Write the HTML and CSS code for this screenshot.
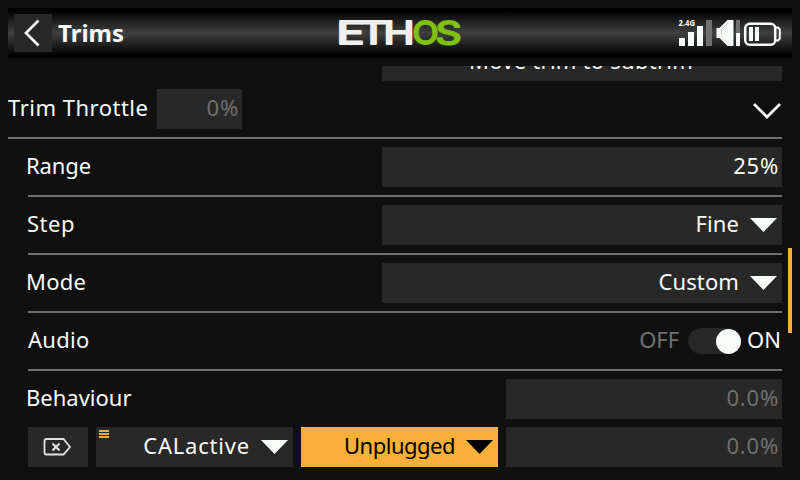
FILE: index.html
```html
<!DOCTYPE html>
<html lang="en">
<head>
<meta charset="utf-8">
<title>Trims</title>
<link rel="stylesheet" href="styles.css">
</head>
<body>
<header class="topbar">
  <button class="back" aria-label="Back"><svg width="38" height="38" viewBox="0 0 38 38"><path d="M24.500 6.500L12 19l12.500 12.500" fill="none" stroke="#f8fcf8" stroke-width="2.700"/></svg></button>
  <h1 class="title">Trims</h1>
  <svg class="logo" width="128" height="40" viewBox="0 -5 128 40">
    <g fill="#f0f0f0" stroke="#f0f0f0">
      <text x="-1.500" y="26" textLength="28" lengthAdjust="spacingAndGlyphs">E</text>
      <text x="22" y="26" textLength="27" lengthAdjust="spacingAndGlyphs">T</text>
      <text x="45.500" y="26" textLength="31" lengthAdjust="spacingAndGlyphs">H</text>
    </g>
    <g fill="#80c010" stroke="#80c010">
      <text x="74.500" y="26" textLength="26" lengthAdjust="spacingAndGlyphs">O</text>
      <text x="97.500" y="26" textLength="26" lengthAdjust="spacingAndGlyphs">S</text>
    </g>
  </svg>
  <svg class="status" width="104" height="30" viewBox="0 0 104 30">
    <text class="band" x="0.500" y="8" textLength="16.500" lengthAdjust="spacingAndGlyphs">2.4G</text>
    <g fill="#f8fcf8">
      <rect x="1" y="20" width="6" height="8"/><rect x="10" y="14" width="6" height="14"/><rect x="19" y="8" width="6" height="20"/>
      <path d="M38.500 10h3l8-8h6v26h-6l-8-8h-3z"/><rect x="58" y="15" width="4" height="13"/>
      <rect x="71" y="9" width="4" height="14"/><rect x="77" y="9" width="4" height="14"/>
    </g>
    <g fill="#707070"><rect x="28" y="2" width="6" height="26"/><rect x="58" y="2" width="4" height="13"/></g>
    <path d="M43.500 17v-5.500l7-7" fill="none" stroke="#b0b0b0" stroke-width=".7"/>
    <rect x="67.200" y="5.700" width="30" height="21" rx="4.500" fill="none" stroke="#f8fcf8" stroke-width="2.500"/>
    <path d="M97.500 9.500h2.500l1.800 2v9l-1.800 2H97.500" fill="none" stroke="#f8fcf8" stroke-width="2"/>
  </svg>
</header>
<main class="viewport">
  <section class="list">
    <div class="row"><button class="field subtrim">Move trim to subtrim</button></div>
    <div class="row head"><span class="label throttle">Trim Throttle</span><span class="field percent dim">0%</span>
      <svg class="chevron" width="30" height="18" viewBox="0 0 30 18"><path d="M2 2l13 13L28 2" fill="none" stroke="#f8fcf8" stroke-width="2.700"/></svg></div>
    <hr class="full">
    <div class="row sub"><span class="label range">Range</span><span class="field wide">25%</span></div>
    <hr>
    <div class="row sub"><span class="label step">Step</span><span class="field wide select fine">Fine<i class="arrow"></i></span></div>
    <hr>
    <div class="row sub"><span class="label mode">Mode</span><span class="field wide select custom">Custom<i class="arrow"></i></span></div>
    <hr>
    <div class="row sub"><span class="label audio">Audio</span><span class="toggle"><span class="off">OFF</span><span class="track"><i class="knob"></i></span><span class="on">ON</span></span></div>
    <hr>
    <div class="row sub"><span class="label behaviour">Behaviour</span><span class="field value dim">0.0%</span></div>
    <div class="row sub cells">
      <button class="field clear" aria-label="Clear"><svg width="30" height="20" viewBox="0 0 30 20"><path d="M3.500 2H20.500L27 10l-6.500 7.500H3.500Q1.500 17.500 1.500 15.500V4Q1.500 2 3.500 2z" fill="none" stroke="#e0e4e0" stroke-width="1.800"/><path d="M9.500 6.500l7 7m0-7l-7 7" stroke="#e8ece8" stroke-width="2"/></svg></button>
      <span class="field select source"><i class="menu"></i>CALactive<i class="arrow"></i></span>
      <span class="field select active">Unplugged<i class="arrow"></i></span>
      <span class="field value dim">0.0%</span>
    </div>
  </section>
  <div class="scroll"></div>
</main>
</body>
</html>
```
FILE: styles.css
```css
* { box-sizing: border-box; }
body {
  margin: 0;
  padding: 8px;
  width: 800px;
  height: 480px;
  overflow: hidden;
  background: #101010;
  color: #f8fcf8;
  font: 22px/37px "Noto Sans", sans-serif;
  letter-spacing: .2px;
}
button { border: 0; padding: 0; font: inherit; color: inherit; letter-spacing: inherit; }
.topbar {
  display: grid;
  grid-template-columns: 38px 286px 128px 1fr 104px;
  align-items: center;
  height: 50px;
  padding: 0 10px 0 6px;
  background: linear-gradient(#000 0, #000 4%, #404040 50%, #000 96%, #000);
}
.back { width: 38px; height: 38px; background: #282828; }
.back svg, .logo, .status { display: block; }
.title { margin: 0; padding-left: 6px; font-size: 24px; line-height: 48px; letter-spacing: 0; }
.logo { font: 400 31px Inter, sans-serif; letter-spacing: 0; stroke-width: 2px; stroke-linejoin: round; }
.status { grid-column: 5; }
.band { fill: #f8fcf8; font: bold 8px "Noto Sans", sans-serif; letter-spacing: 0; }
.viewport { position: relative; height: 406px; margin-top: 8px; overflow: hidden; }
.list { width: 774px; margin-top: -25px; }
.row { display: flex; justify-content: space-between; height: 40px; margin-bottom: 8px; }
.sub { padding-left: 20px; }
hr { height: 2px; margin: 0 0 8px 20px; border: 0; background: #707070; }
hr.full { margin-left: 0; }
.field { display: block; height: 40px; background: #282828; padding-right: 3px; text-align: right; white-space: nowrap; letter-spacing: .8px; }
.label { margin-left: -2px; white-space: nowrap; }
.subtrim { width: 400px; margin-left: auto; padding: 0 2px 2px 0; line-height: 38px; text-align: center; letter-spacing: .25px; }
.throttle { width: 140px; margin-left: 0; letter-spacing: .5px; }
.range { letter-spacing: -.1px; }
.step { margin-left: -1px; letter-spacing: .5px; }
.audio { margin-left: 0; letter-spacing: .3px; }
.behaviour { letter-spacing: 0; }
.percent { width: 85px; margin-left: 9px; }
.chevron { margin: 13px 0 0 auto; }
.wide { width: 400px; }
.value { width: 276px; }
.dim { color: #707070; }
.select { display: flex; justify-content: flex-end; padding-right: 5px; }
.arrow { width: 27px; height: 14px; margin: 13px 0 0 11px; background: currentColor; clip-path: polygon(0 0, 100% 0, 50% 100%); }
.fine, .custom { letter-spacing: .1px; }
.toggle { display: flex; letter-spacing: 0; }
.track { width: 53px; height: 26px; margin: 7px 6px 0 9px; padding: 1px 0 0 28px; border-radius: 13px; background: #282828; }
.knob { display: block; width: 25px; height: 25px; border-radius: 50%; background: #f8fcf8; }
.off { color: #707070; letter-spacing: -.1px; }
.on { width: 35px; }
.cells { gap: 8px; }
.clear { display: flex; width: 60px; padding: 0; align-items: center; justify-content: center; }
.source, .active { width: 197px; }
.menu { width: 10px; height: 8px; margin: 3px auto 0 3px; background: repeating-linear-gradient(#f8b038 0 2px, transparent 2px 3px); }
.active { background: #f8b038; color: #000; letter-spacing: -.5px; }
.scroll { position: absolute; right: 0; top: 182px; width: 4px; height: 85px; background: #f8b038; }
```
